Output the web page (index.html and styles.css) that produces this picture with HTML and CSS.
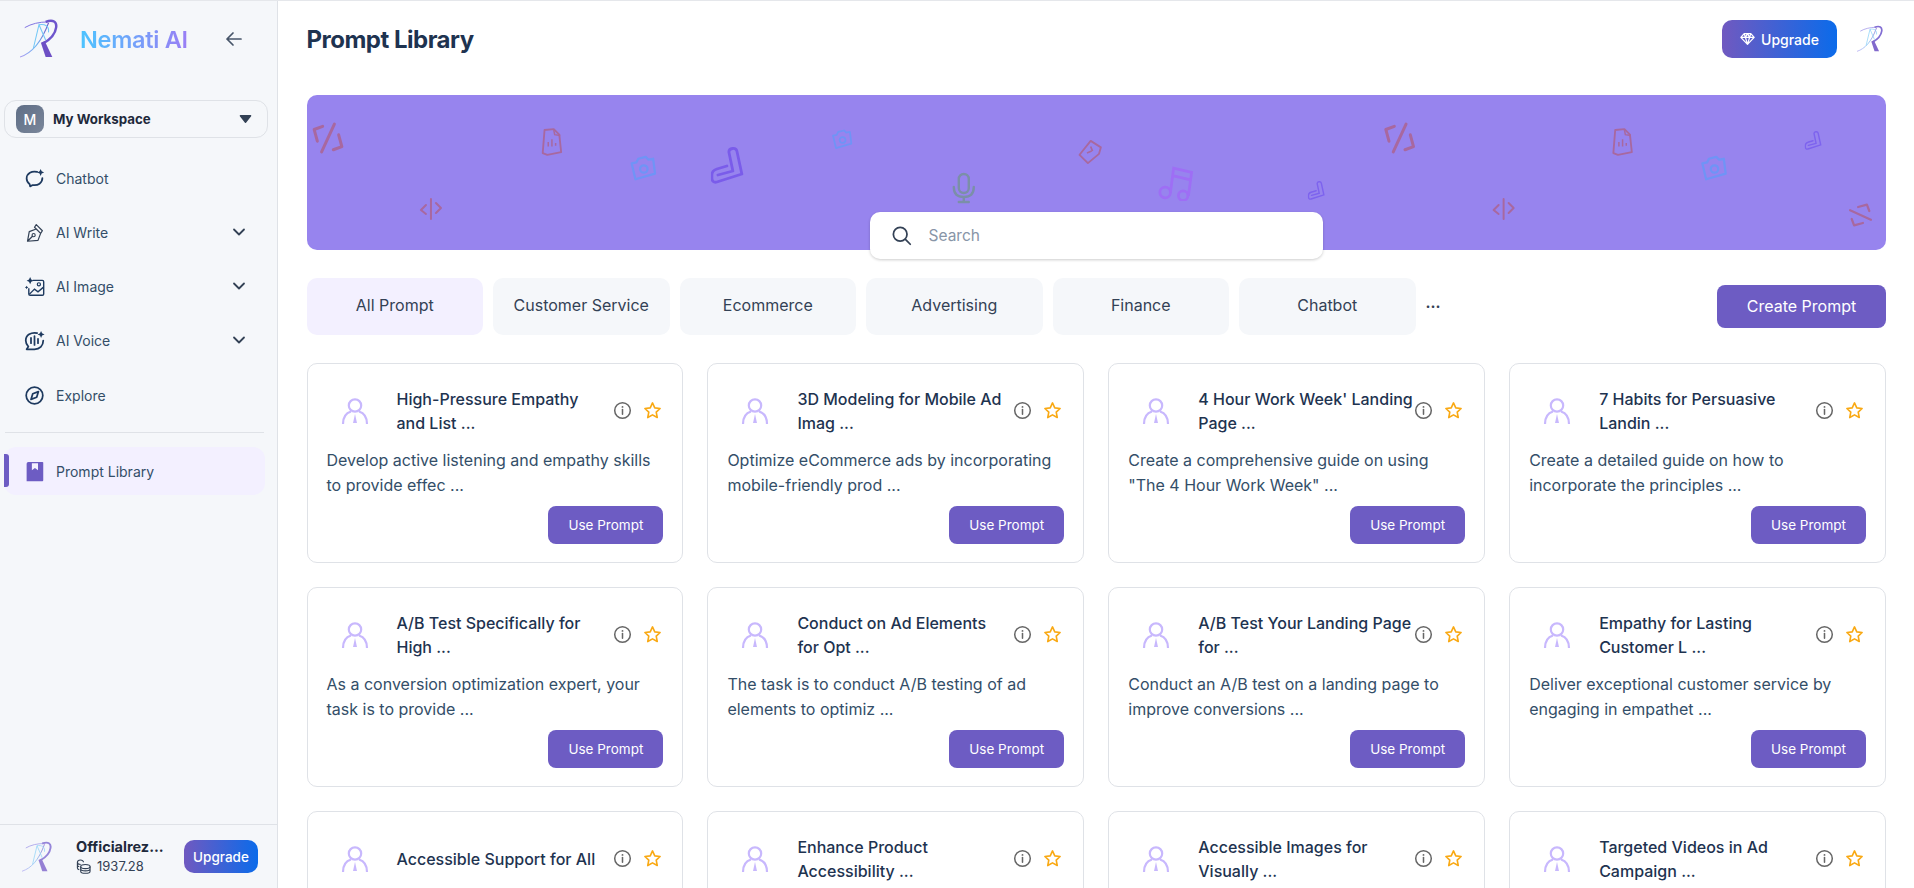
FILE: index.html
```html
<!DOCTYPE html>
<html lang="en">
<head>
<meta charset="utf-8">
<title>Prompt Library</title>
<link rel="stylesheet" href="styles.css">
</head>
<body>
<svg class="defs" width="0" height="0" aria-hidden="true">
  <defs>
    <linearGradient id="lg" x1="0" y1="1" x2="1" y2="0">
      <stop offset="0" stop-color="#a99af0"/><stop offset=".45" stop-color="#6fb6f2"/><stop offset="1" stop-color="#6d4fc4"/>
    </linearGradient>
    <symbol id="logo" viewBox="0 0 40 42">
      <path d="M0 40C12 36 22 26 30 4" fill="none" stroke="url(#lg)" stroke-width="1.2"/>
      <path d="M5 9C12 5 20 3 30 3" fill="none" stroke="#7b6fe0" stroke-width="1"/>
      <path d="M27 3C35 0 39 3 38 9 37 17 31 22 24 26" fill="none" stroke="#6d55cc" stroke-width="2.6"/>
      <path d="M14 31L20 6 27 22M20 6C26 5 31 7 30 14" fill="none" stroke="#74c8f6" stroke-width="1.1"/>
      <path d="M22 25L27 40H34L26 23z" fill="#6d4fc4"/>
    </symbol>
    <symbol id="info" viewBox="0 0 20 20">
      <circle cx="10" cy="10" r="8.2" fill="none" stroke="#666" stroke-width="1.6"/>
      <path d="M10 9v5" stroke="#666" stroke-width="1.6" stroke-linecap="round"/><circle cx="10" cy="6.2" r="1" fill="#666"/>
    </symbol>
    <symbol id="star" viewBox="0 0 20 20">
      <path d="M10 2l2.4 5.2 5.6.7-4.1 3.9 1.1 5.6L10 14.6l-5 2.8 1.1-5.6L2 7.9l5.6-.7z" fill="none" stroke="#f9a914" stroke-width="1.7" stroke-linejoin="round"/>
    </symbol>
    <symbol id="person" viewBox="0 0 28 28">
      <circle cx="14" cy="8.5" r="6.2" fill="none" stroke="#c8b8fd" stroke-width="2.2"/>
      <path d="M2 27c0-7 3-11 8-12.5M26 27c0-7-3-11-8-12.500" fill="none" stroke="#c8b8fd" stroke-width="2.2"/>
      <path d="M14 17l2 9h-4z" fill="#c8b8fd"/>
    </symbol>
    <symbol id="chev" viewBox="0 0 14 14"><path d="M2 4.5l5 5 5-5" fill="none" stroke="#334155" stroke-width="1.8" stroke-linecap="round" stroke-linejoin="round"/></symbol>
    <symbol id="brackets" viewBox="0 0 30 30"><path d="M10 4L2 7l3 11M20 26l8-3-3-11M21 2L9 28" fill="none" stroke="currentColor" stroke-width="2.8" stroke-linecap="round" stroke-linejoin="round"/></symbol>
    <symbol id="file" viewBox="0 0 26 30"><path d="M5 2l10-1 6 6 2 19-15 3-5-2z" fill="none" stroke="currentColor" stroke-width="2" stroke-linejoin="round"/><path d="M9 20v-5M13 20v-8M17 19v-3M15 2l1 5 6 1" fill="none" stroke="currentColor" stroke-width="1.6"/></symbol>
    <symbol id="camera" viewBox="0 0 30 30"><path d="M3 9l5-1 2-4 8-2 3 3 5-1 2 16-21 6z" fill="none" stroke="currentColor" stroke-width="2.4" stroke-linejoin="round"/><circle cx="16" cy="15" r="4" fill="none" stroke="currentColor" stroke-width="2.4"/></symbol>
    <symbol id="bend" viewBox="0 0 34 37"><path d="M18 5c0-4 7-5 8-1l5 23L6 35c-3 1-5-1-5-4v-3c0-3 2-5 5-6l10-3M18 5l4 19L7 28" fill="none" stroke="currentColor" stroke-width="2.8" stroke-linejoin="round" stroke-linecap="round"/></symbol>
    <symbol id="code" viewBox="0 0 24 24"><path d="M12 2v20M7 8l-5 5 5 4M17 6l5 5-5 5" fill="none" stroke="currentColor" stroke-width="2" stroke-linecap="round" stroke-linejoin="round"/></symbol>
    <symbol id="mic" viewBox="0 0 26 30"><rect x="8" y="1" width="10" height="19" rx="5" fill="none" stroke="currentColor" stroke-width="2.4"/><path d="M3 14c0 7 4 10 10 10s10-3 10-10M13 24v4M8 29h10" fill="none" stroke="currentColor" stroke-width="2.4" stroke-linecap="round"/></symbol>
    <symbol id="tag" viewBox="0 0 28 28"><path d="M15 2l11 7-2 7-12 10-9-9z" fill="none" stroke="currentColor" stroke-width="2" stroke-linejoin="round"/><path d="M11 15l5-2M15 8l2 5" fill="none" stroke="currentColor" stroke-width="1.8"/></symbol>
    <symbol id="music" viewBox="0 0 34 34"><circle cx="7" cy="26" r="5" fill="none" stroke="currentColor" stroke-width="2.6"/><circle cx="24" cy="29" r="4.5" fill="none" stroke="currentColor" stroke-width="2.6"/><path d="M12 26l3-23 17 4-3 22M14 10l17 4" fill="none" stroke="currentColor" stroke-width="2.6"/></symbol>
  </defs>
</svg>

<div class="app">
  <aside class="sidebar">
    <div class="brand">
      <svg class="brand-logo"><use href="#logo"/></svg>
      <span class="brand-name">Nemati AI</span>
      <svg class="back" viewBox="0 0 18 18"><path d="M16 9H2M8 3L2 9l6 6" fill="none" stroke="#475569" stroke-width="1.7" stroke-linecap="round" stroke-linejoin="round"/></svg>
    </div>
    <div class="workspace">
      <span class="ws-avatar">M</span>
      <span class="ws-name">My Workspace</span>
      <svg class="ws-caret" viewBox="0 0 14 10"><path d="M1.5 1.5h11L7 8.5z" fill="#334155" stroke="#334155" stroke-width="1.5" stroke-linejoin="round"/></svg>
    </div>
    <nav class="nav">
      <a class="nav-item">
        <svg class="nav-icon" viewBox="0 0 24 24"><path d="M15 4.500C9 3 3 6 3 12c0 3 1.500 5 3.500 6.500L7 21l3-1.500c6 1 11-2.500 11-8" fill="none" stroke="#1e3a5f" stroke-width="2" stroke-linecap="round" stroke-linejoin="round"/><path d="M19 1l1.200 2.800L23 5l-2.800 1.200L19 9l-1.200-2.800L15 5l2.800-1.200z" fill="#1e3a5f"/></svg>
        <span class="nav-label">Chatbot</span>
      </a>
      <a class="nav-item">
        <svg class="nav-icon" viewBox="0 0 24 24"><path d="M4 22l2-11 8-3 5 5-3 8zM4 22l6-6M14 3l7 7-2 3-7-7z" fill="none" stroke="#334155" stroke-width="1.400" stroke-linejoin="round"/><circle cx="11" cy="15" r="1.800" fill="none" stroke="#334155" stroke-width="1.300"/></svg>
        <span class="nav-label">AI Write</span>
        <svg class="nav-chev"><use href="#chev"/></svg>
      </a>
      <a class="nav-item">
        <svg class="nav-icon" viewBox="0 0 24 24"><path d="M10 5h11a1.500 1.500 0 0 1 1.500 1.500v14a1.500 1.500 0 0 1-1.500 1.500H7a1.500 1.500 0 0 1-1.500-1.500V14" fill="none" stroke="#1e3a5f" stroke-width="1.600"/><path d="M6 21l6-6 4 3 6-5" fill="none" stroke="#1e3a5f" stroke-width="1.600"/><circle cx="17" cy="9.500" r="1.800" fill="none" stroke="#1e3a5f" stroke-width="1.400"/><path d="M7 1l1.300 3L11 5.300 8.300 6.500 7 9.500 5.700 6.500 3 5.300 5.700 4zM3 11l.7 1.300L5 13l-1.300.7L3 15l-.7-1.300L1 13l1.300-.7z" fill="#1e3a5f"/></svg>
        <span class="nav-label">AI Image</span>
        <svg class="nav-chev"><use href="#chev"/></svg>
      </a>
      <a class="nav-item">
        <svg class="nav-icon" viewBox="0 0 24 24"><path d="M15 3.500C8 2 2 6 2 12c0 3 1 5 3 7l-2 3h9c6 0 10-4 10-10" fill="none" stroke="#1e3a5f" stroke-width="2" stroke-linecap="round" stroke-linejoin="round"/><path d="M8 9v6M12 7v10M16 10v5" stroke="#1e3a5f" stroke-width="2" stroke-linecap="round"/><path d="M19.500 1l1.200 2.800L23.500 5l-2.800 1.200L19.500 9l-1.200-2.800L15.500 5l2.800-1.200z" fill="#1e3a5f"/></svg>
        <span class="nav-label">AI Voice</span>
        <svg class="nav-chev"><use href="#chev"/></svg>
      </a>
      <a class="nav-item nav-item-last">
        <svg class="nav-icon" viewBox="0 0 24 24"><circle cx="12" cy="12" r="9.500" fill="none" stroke="#1e3a5f" stroke-width="2"/><path d="M16.500 7.500l-2 6.500-6.500 2.500 2-6.500z" fill="none" stroke="#1e3a5f" stroke-width="2" stroke-linejoin="round"/></svg>
        <span class="nav-label">Explore</span>
      </a>
    </nav>
    <hr class="divider">
    <a class="nav-item nav-active">
      <svg class="nav-icon" viewBox="0 0 24 24"><path d="M3 3a2 2 0 0 1 2-2h16a1 1 0 0 1 1 1v20a1 1 0 0 1-1 1H3z" fill="#6d5cc3"/><path d="M9 2.500h7v8l-3.500-2.500-3.500 2.500z" fill="#f3f0ff"/></svg>
      <span class="nav-label">Prompt Library</span>
    </a>
    <div class="account">
      <svg class="account-logo"><use href="#logo"/></svg>
      <div class="account-info">
        <div class="account-name">Officialrez...</div>
        <div class="account-credit">
          <svg class="coin" viewBox="0 0 16 16"><ellipse cx="10" cy="8" rx="5" ry="2.200" fill="none" stroke="#334155" stroke-width="1.200"/><path d="M5 8v5c0 1.200 2.200 2.200 5 2.200s5-1 5-2.200V8M5 10.500c0 1.200 2.200 2.200 5 2.200s5-1 5-2.200M8 3.500C8 2 6.500 1 4.800 1S1.500 2 1.500 3.500v6c0 .8.800 1.500 2 1.800M1.500 6.500c0 .8.800 1.500 2 1.800M1.500 3.500C1.500 5 3 5.800 5 5.800" fill="none" stroke="#334155" stroke-width="1.200"/></svg>
          <span>1937.28</span>
        </div>
      </div>
      <button class="btn-grad btn-grad-small">Upgrade</button>
    </div>
  </aside>

  <main class="main">
    <header class="topbar">
      <h1 class="page-title">Prompt Library</h1>
      <button class="btn-grad btn-grad-top">
        <svg class="gem" viewBox="0 0 18 16"><path d="M5 1.500h8l4 4.500-8 8.500L1 6zM1 6h16M6.500 6L9 14.500 11.500 6M5 1.500L6.500 6 9 1.500 11.500 6 13 1.500" fill="none" stroke="#fff" stroke-width="1.500" stroke-linejoin="round"/></svg>
        Upgrade
      </button>
      <svg class="top-logo"><use href="#logo"/></svg>
    </header>

    <section class="banner">
      <svg class="banner-art" viewBox="0 0 1580 155" aria-hidden="true">
        <use href="#brackets" class="c-red" x="5" y="27" width="32" height="32"/>
        <use href="#file" class="c-red" x="233" y="33" width="24" height="28"/>
        <use href="#camera" class="c-blue" x="322" y="60" width="28" height="28"/>
        <use href="#bend" class="c-violet" x="404" y="52" width="34" height="37"/>
        <use href="#camera" class="c-blue" x="524" y="34" width="22" height="22"/>
        <use href="#code" class="c-red" x="112" y="102" width="24" height="24"/>
        <use href="#mic" class="c-grey" x="644" y="77" width="26" height="32"/>
        <use href="#tag" class="c-red" x="770" y="44" width="26" height="26"/>
        <use href="#music" class="c-light" x="851" y="70" width="36" height="36"/>
        <use href="#bend" class="c-small" x="1001" y="86" width="18" height="19"/>
        <use href="#brackets" class="c-red" x="1077" y="27" width="32" height="32"/>
        <use href="#file" class="c-red" x="1304" y="33" width="24" height="28"/>
        <use href="#camera" class="c-blue" x="1393" y="60" width="28" height="28"/>
        <use href="#bend" class="c-small" x="1498" y="36" width="18" height="19"/>
        <use href="#code" class="c-red" x="1185" y="102" width="24" height="24"/>
        <use href="#brackets" class="c-red" x="1542" y="108" width="24" height="24" transform="rotate(90 1554 120)"/>
      </svg>
      <label class="search">
        <svg class="search-icon" viewBox="0 0 24 24"><circle cx="10.500" cy="10.500" r="7.800" fill="none" stroke="#334155" stroke-width="2"/><path d="M16.500 16.500L22 22" stroke="#334155" stroke-width="2" stroke-linecap="round"/></svg>
        <span class="search-text">Search</span>
      </label>
    </section>

    <div class="tabs-row">
      <div class="tabs">
        <button class="tab tab-active">All Prompt</button>
        <button class="tab">Customer Service</button>
        <button class="tab">Ecommerce</button>
        <button class="tab">Advertising</button>
        <button class="tab">Finance</button>
        <button class="tab">Chatbot</button>
        <span class="more">···</span>
      </div>
      <button class="btn-create">Create Prompt</button>
    </div>

    <div class="cards">
      <article class="card">
        <div class="card-head"><svg class="person"><use href="#person"/></svg><h3 class="card-title">High-Pressure Empathy<br>and List ...</h3><svg class="info"><use href="#info"/></svg><svg class="star"><use href="#star"/></svg></div>
        <p class="card-text">Develop active listening and empathy skills to provide effec ...</p>
        <button class="btn-use">Use Prompt</button>
      </article>
      <article class="card">
        <div class="card-head"><svg class="person"><use href="#person"/></svg><h3 class="card-title">3D Modeling for Mobile Ad Imag ...</h3><svg class="info"><use href="#info"/></svg><svg class="star"><use href="#star"/></svg></div>
        <p class="card-text">Optimize eCommerce ads by incorporating mobile-friendly prod ...</p>
        <button class="btn-use">Use Prompt</button>
      </article>
      <article class="card">
        <div class="card-head"><svg class="person"><use href="#person"/></svg><h3 class="card-title">4 Hour Work Week' Landing Page ...</h3><svg class="info"><use href="#info"/></svg><svg class="star"><use href="#star"/></svg></div>
        <p class="card-text">Create a comprehensive guide on using "The 4 Hour Work Week" ...</p>
        <button class="btn-use">Use Prompt</button>
      </article>
      <article class="card">
        <div class="card-head"><svg class="person"><use href="#person"/></svg><h3 class="card-title">7 Habits for Persuasive Landin ...</h3><svg class="info"><use href="#info"/></svg><svg class="star"><use href="#star"/></svg></div>
        <p class="card-text">Create a detailed guide on how to incorporate the principles ...</p>
        <button class="btn-use">Use Prompt</button>
      </article>
      <article class="card">
        <div class="card-head"><svg class="person"><use href="#person"/></svg><h3 class="card-title">A/B Test Specifically for High ...</h3><svg class="info"><use href="#info"/></svg><svg class="star"><use href="#star"/></svg></div>
        <p class="card-text">As a conversion optimization expert, your task is to provide ...</p>
        <button class="btn-use">Use Prompt</button>
      </article>
      <article class="card">
        <div class="card-head"><svg class="person"><use href="#person"/></svg><h3 class="card-title">Conduct on Ad Elements<br>for Opt ...</h3><svg class="info"><use href="#info"/></svg><svg class="star"><use href="#star"/></svg></div>
        <p class="card-text">The task is to conduct A/B testing of ad elements to optimiz ...</p>
        <button class="btn-use">Use Prompt</button>
      </article>
      <article class="card">
        <div class="card-head"><svg class="person"><use href="#person"/></svg><h3 class="card-title">A/B Test Your Landing Page for ...</h3><svg class="info"><use href="#info"/></svg><svg class="star"><use href="#star"/></svg></div>
        <p class="card-text">Conduct an A/B test on a landing page to improve conversions ...</p>
        <button class="btn-use">Use Prompt</button>
      </article>
      <article class="card">
        <div class="card-head"><svg class="person"><use href="#person"/></svg><h3 class="card-title">Empathy for Lasting Customer L ...</h3><svg class="info"><use href="#info"/></svg><svg class="star"><use href="#star"/></svg></div>
        <p class="card-text">Deliver exceptional customer service by engaging in empathet ...</p>
        <button class="btn-use">Use Prompt</button>
      </article>
      <article class="card">
        <div class="card-head"><svg class="person"><use href="#person"/></svg><h3 class="card-title">Accessible Support for All</h3><svg class="info"><use href="#info"/></svg><svg class="star"><use href="#star"/></svg></div>
      </article>
      <article class="card">
        <div class="card-head"><svg class="person"><use href="#person"/></svg><h3 class="card-title">Enhance Product Accessibility ...</h3><svg class="info"><use href="#info"/></svg><svg class="star"><use href="#star"/></svg></div>
      </article>
      <article class="card">
        <div class="card-head"><svg class="person"><use href="#person"/></svg><h3 class="card-title">Accessible Images for Visually ...</h3><svg class="info"><use href="#info"/></svg><svg class="star"><use href="#star"/></svg></div>
      </article>
      <article class="card">
        <div class="card-head"><svg class="person"><use href="#person"/></svg><h3 class="card-title">Targeted Videos in Ad Campaign ...</h3><svg class="info"><use href="#info"/></svg><svg class="star"><use href="#star"/></svg></div>
      </article>
    </div>
  </main>
</div>
</body>
</html>
```
FILE: styles.css
```css
* { box-sizing: border-box; }
html, body { margin: 0; height: 100%; overflow: hidden; }
body { font-family: Inter, "Noto Sans", sans-serif; color: #334155; background: #fff; }
.defs { position: absolute; }
button { font-family: inherit; border: 0; cursor: pointer; }
h1, h3, p { margin: 0; }

.app { display: flex; height: 888px; border-top: 1px solid #e5e7eb; overflow: hidden; }

/* sidebar */
.sidebar { width: 278px; flex: none; display: flex; flex-direction: column; background: #f5f7fa; border-right: 1px solid #dfe2e7; }
.brand { height: 76px; display: flex; align-items: center; padding-left: 20px; }
.brand-logo { width: 38px; height: 40px; }
.brand-name { margin-left: 22px; font-size: 23.5px; font-weight: 600; letter-spacing: -0.3px; background: linear-gradient(90deg, #4cc4ff, #9a7ef5); -webkit-background-clip: text; background-clip: text; color: transparent; }
.back { width: 18px; height: 18px; margin-left: 37px; }
.workspace { margin: 23px 9px 0 4px; height: 38px; display: flex; align-items: center; padding: 0 11px; border: 1px solid #dfe2e7; border-radius: 12px; }
.ws-avatar { width: 28px; height: 28px; border-radius: 8px; background: linear-gradient(135deg, #5f6e86, #7a869a); color: #fff; font-size: 14px; font-weight: 500; display: flex; align-items: center; justify-content: center; }
.ws-name { margin-left: 9px; font-size: 13.3px; font-weight: 700; color: #1e293b; flex: 1; }
.ws-caret { width: 13px; height: 10px; margin-right: 4px; }
.nav { margin-top: 18px; display: flex; flex-direction: column; gap: 10px; }
.nav-item { height: 44px; display: flex; align-items: center; padding-left: 24px; color: #334e68; }
.nav-item-last { margin-top: 1px; }
.nav-icon { width: 21px; height: 21px; flex: none; }
.nav-label { margin-left: 11px; font-size: 14px; flex: 1; }
.nav-chev { width: 14px; height: 14px; margin-right: 31px; }
.divider { margin: 15px 13px 14px 5px; border: 0; border-top: 1px solid #dfe2e7; }
.nav-active { position: relative; height: 48px; margin: 0 12px 0 4px; padding-left: 20px; background: #f3f0ff; border-radius: 12px; }
.nav-active::before { content: ""; position: absolute; left: 0; top: 7px; bottom: 8px; width: 5px; background: #6d5cc3; border-radius: 0 3px 3px 0; }
.account { margin-top: auto; height: 64px; border-top: 1px solid #dfe2e7; display: flex; align-items: center; padding-left: 22px; }
.account-logo { width: 30px; height: 34px; opacity: .7; flex: none; }
.account-info { margin-left: 24px; width: 108px; }
.account-name { font-size: 14.5px; font-weight: 700; color: #1e293b; line-height: 19px; }
.account-credit { display: flex; align-items: center; gap: 6px; font-size: 13px; line-height: 20px; color: #334155; }
.coin { width: 15px; height: 15px; }

.btn-grad { color: #fff; background: linear-gradient(90deg, #7059c0, #0b6bea); border-radius: 10px; font-weight: 500; }
.btn-grad-small { width: 74px; height: 33px; font-size: 13.5px; padding: 0; }
.btn-grad-top { width: 115px; height: 38px; font-size: 14px; display: flex; align-items: center; justify-content: center; gap: 6px; padding: 0; }
.gem { width: 15px; height: 14px; }

/* main */
.main { flex: 1; min-width: 0; padding: 0 28px 0 28.5px; }
.topbar { height: 76px; display: flex; align-items: center; margin-bottom: 18px; }
.page-title { flex: 1; font-size: 24px; font-weight: 700; color: #1e3350; letter-spacing: -0.5px; }
.top-logo { width: 26px; height: 28px; margin: 0 3px 0 20px; opacity: .85; }

.banner { position: relative; height: 155px; background: #9784ee; border-radius: 10px; }
.banner-art { display: block; width: 100%; height: 100%; }
.c-red { color: #a8689f; }
.c-blue { color: #6f94f6; }
.c-violet { color: #7a5cea; }
.c-light { color: #9e6ef5; }
.c-small { color: #7d63ee; }
.c-grey { color: #7b8fa8; }
.search { position: absolute; left: 563px; bottom: -9px; width: 453px; height: 47px; background: #fff; border-radius: 10px; box-shadow: 0 1px 3px rgba(0,0,0,.2); display: flex; align-items: center; padding-left: 21px; }
.search-icon { width: 21px; height: 21px; }
.search-text { margin-left: 17px; font-size: 15.5px; color: #8895a7; }

.tabs-row { margin-top: 28px; display: flex; align-items: center; justify-content: space-between; }
.tabs { display: flex; align-items: center; gap: 10px; }
.tab { width: 176.5px; height: 57px; background: #f5f7fa; border-radius: 10px; font-size: 16px; color: #334155; padding: 0 0 3px; }
.tab-active { background: #f3f0ff; }
.more { margin-left: 0; font-size: 15px; font-weight: 700; color: #334155; }
.btn-create { width: 169px; height: 43px; background: #6d5cc3; color: #fff; border-radius: 8px; font-size: 16px; font-weight: 400; padding: 0 0 2px; }

.cards { margin-top: 28px; display: grid; grid-template-columns: repeat(4, 1fr); grid-auto-rows: 200px; gap: 24px; }
.card { border: 1px solid #dfe2e7; border-radius: 10px; padding: 0 19px; background: #fff; display: flex; flex-direction: column; }
.card-head { height: 84px; padding-top: 9px; display: flex; align-items: center; }
.person { width: 28px; height: 28px; flex: none; margin-left: 14px; }
.card-title { margin-left: 28px; width: 216px; flex: none; font-size: 16px; font-weight: 450; line-height: 24px; color: #1e3350; }
.info { width: 19px; height: 19px; flex: none; }
.star { width: 19px; height: 19px; flex: none; margin-left: 11px; }
.card-text { font-size: 16px; line-height: 25px; height: 50px; max-width: 330px; color: #334e68; }
.btn-use { align-self: flex-end; margin-top: 8px; width: 115px; height: 38px; background: #6d5cc3; color: #fff; border-radius: 8px; font-size: 13.5px; font-weight: 400; padding: 0; }
```
